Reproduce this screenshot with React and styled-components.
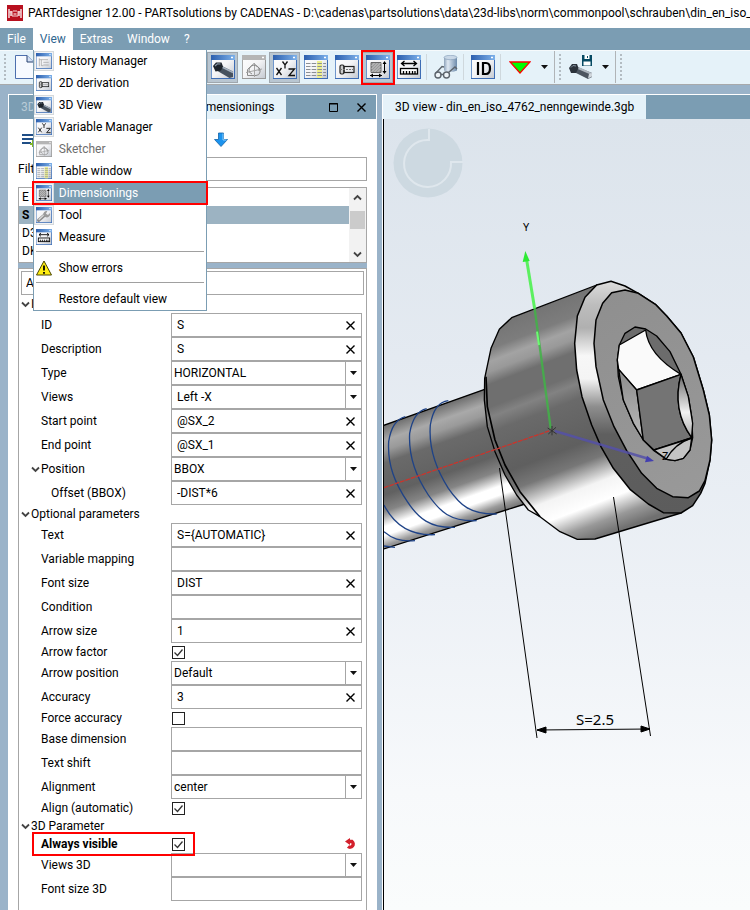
import React, { useState } from 'react';
import styled, { createGlobalStyle, css } from 'styled-components';

const GlobalStyle = createGlobalStyle`
*{
    box-sizing: border-box;
}
body{
    margin: 0;
    font-family: Roboto, "Noto Sans", sans-serif;
    font-size: 12px;
    color: #000;
    background: #9ab3c9;
}
button, input, select{
    font: inherit;
    color: inherit;
    margin: 0;
    border-radius: 0;
}
button{
    border: 0;
    padding: 0;
    background: none;
}
svg{
    display: block;
    flex-shrink: 0;
}
`;

const Window = styled.div`
display: flex;
flex-direction: column;
min-height: 100vh;
overflow: hidden;
`;
const TitleBar = styled.header`
display: flex;
align-items: center;
gap: 5px;
height: 28px;
padding: 0 0 2px 7px;
background: #fff;
white-space: nowrap;
overflow: hidden;
`;
const Title = styled.h1`
margin: 0;
font-size: 12px;
font-weight: 400;
`;
const MenuBar = styled.nav`
display: flex;
height: 22px;
background: #7b9db3;
`;
const MenuSlot = styled.div`
position: relative;
`;
const MenuTitle = styled.button`
height: 22px;
padding: 0 7px;
color: ${({ $open }) => ($open ? '#2f6690' : '#fff')};
background: ${({ $open }) => ($open ? '#fff' : 'transparent')};
`;
const Menu = styled.div`
position: absolute;
z-index: 5;
top: 22px;
left: 0;
width: 174px;
border: 1px solid #7b9db3;
border-top: 0;
background: #fff;
`;
const redFrame = css`
position: relative;
&::after{
    content: '';
    position: absolute;
    z-index: 2;
    inset: ${({ $inset }) => $inset || '-1px -2px'};
    border: 2px solid #f00;
    pointer-events: none;
}
`;
const MenuItem = styled.button`
display: flex;
align-items: center;
gap: 5px;
width: 100%;
height: 22px;
text-align: left;
color: ${({ disabled }) => (disabled ? '#6d6d6d' : '#000')};
${({ $marked }) => $marked && css`
    ${redFrame}
    color: #fff;
    background: #7b9db3;
`}
`;
const MenuIcon = styled.span`
display: flex;
align-items: center;
justify-content: center;
width: 20px;
height: 20px;
border: 1px solid ${({ $on }) => ($on ? '#d5d9dc' : 'transparent')};
background: ${({ $on }) => ($on ? '#f1f3f5' : 'transparent')};
`;
const MenuLine = styled.hr`
height: 1px;
margin: 3px 2px 5px;
border: 0;
background: #a0a0a0;
`;

const ToolBar = styled.div`
display: flex;
height: 35px;
padding-bottom: 1px;
border-top: 1px solid #f6fafc;
border-bottom: 1px solid #a7a9ab;
background: #e5f2f9;
`;
const ToolGroup = styled.div`
display: flex;
align-items: center;
flex: 0 0 auto;
border-right: ${({ $last }) => ($last ? '0' : '1px solid #b0b4b7')};
`;
const FileTools = styled.div`
display: flex;
align-items: center;
flex: 0 0 207px;
`;
const Grip = styled.span`
width: 2px;
height: 26px;
margin: 0 4px;
background: repeating-linear-gradient(#b3bcc2 0 2px, transparent 2px 4px);
`;
const ToolButton = styled.button`
display: flex;
align-items: center;
justify-content: center;
width: 31px;
height: 31px;
border: 1px solid ${({ $on }) => ($on ? '#9fa7ae' : 'transparent')};
background: ${({ $on }) => ($on ? '#b9c6d1' : 'transparent')};
${({ $marked }) => $marked && redFrame}
`;
const ToolLine = styled.span`
width: 1px;
height: 26px;
margin: 0 3px 0 2px;
background: #cfd8dd;
`;
const DropButton = styled.button`
display: flex;
align-items: center;
justify-content: center;
width: 19px;
height: 31px;
`;

const Main = styled.main`
display: grid;
grid-template-columns: minmax(0, 369fr) minmax(0, 368fr);
gap: 5px;
flex: 1;
padding: 9px 0 0 8px;
`;
const Dock = styled.section`
display: flex;
flex-direction: column;
border: 1px solid #fff;
border-bottom: 0;
background: #fff;
`;
const ViewDock = styled(Dock)`
border-right: 0;
`;
const TabBar = styled.div`
display: flex;
height: 24px;
background: #7b9db3;
`;
const Tab = styled.button`
padding: 0 12px;
text-align: left;
white-space: nowrap;
flex: ${({ $wide }) => ($wide ? '0 0 174px' : '0 0 auto')};
color: ${({ $active }) => ($active ? '#000' : '#b9cbd7')};
background: ${({ $active }) => ($active ? '#e5f2f9' : 'transparent')};
`;
const DockButtons = styled.div`
display: flex;
align-items: center;
gap: 18px;
margin-left: auto;
padding-right: 10px;
`;
const DockBody = styled.div`
display: flex;
flex-direction: column;
flex: 1;
padding: 0 9px;
`;
const DockTools = styled.div`
display: flex;
align-items: center;
gap: 178px;
height: 38px;
padding: 4px 0 0 4px;
`;
const FilterRow = styled.div`
display: flex;
align-items: center;
gap: 8px;
height: 24px;
margin-bottom: 6px;
input{
    flex: 1;
    height: 24px;
    border: 1px solid #a6a6a6;
}
`;
const ListBox = styled.div`
display: flex;
height: 76px;
border: 1px solid #a6a6a6;
`;
const List = styled.ul`
flex: 1;
margin: 0;
padding: 0;
list-style: none;
`;
const ListRow = styled.li`
height: 18px;
padding-left: 3px;
line-height: 18px;
font-weight: ${({ $active }) => ($active ? 700 : 400)};
background: ${({ $active }) => ($active ? '#9cb3c2' : 'transparent')};
`;
const ScrollBar = styled.div`
display: flex;
flex-direction: column;
align-items: center;
justify-content: space-between;
width: 17px;
padding: 6px 0 4px;
background: #f2f2f2;
`;
const Thumb = styled.span`
width: 15px;
height: 18px;
margin-bottom: 12px;
background: #cbcbcb;
`;
const Splitter = styled.div`
height: 5px;
background: #9ab3c9;
`;
const Properties = styled.form`
flex: 1;
padding: 2px 2px 9px;
border: 1px solid #a6a6a6;
border-bottom: 0;
`;
const Search = styled.input`
display: block;
width: 100%;
height: 24px;
padding: 0 4px;
border: 1px solid #a6a6a6;
`;
const Section = styled.h2`
display: flex;
align-items: center;
gap: 1px;
height: 18px;
margin: 0;
font-size: 12px;
font-weight: 400;
`;
const Row = styled.div`
display: flex;
align-items: center;
height: ${({ $short }) => ($short ? '18px' : '24px')};
padding-right: 2px;
${({ $marked }) => $marked && css`
    font-weight: 700;
`}
`;
const RowMark = styled.div`
${redFrame}
display: flex;
align-items: center;
height: 18px;
flex: 0 0 165px;
`;
const RowLabel = styled.label`
display: flex;
align-items: center;
gap: 1px;
flex: 0 0 150px;
padding-left: ${({ $level }) => ($level === 'group' ? '10px' : $level === 'deep' ? '30px' : '20px')};
`;
const Field = styled.div`
position: relative;
display: flex;
flex: 1;
min-width: 0;
height: 24px;
border: 1px solid #a6a6a6;
background: #fff;
`;
const TextBox = styled.input`
flex: 1;
min-width: 0;
padding: 0 0 1px 5px;
border: 0;
outline: 0;
`;
const ClearButton = styled.button`
display: flex;
align-items: center;
justify-content: center;
flex: 0 0 22px;
`;
const Select = styled.select`
flex: 1;
padding: 0 20px 1px ${({ $indent }) => ($indent ? '5px' : '2px')};
border: 0;
outline: 0;
appearance: none;
background: transparent;
`;
const SelectArrow = styled.span`
position: absolute;
top: 0;
right: 0;
display: flex;
align-items: center;
justify-content: center;
width: 16px;
height: 22px;
border-left: 1px solid #a6a6a6;
pointer-events: none;
`;
const CheckBox = styled.input`
appearance: none;
width: 13px;
height: 13px;
margin: 0 0 0 1px;
border: 1px solid #222;
background: #fff;
&:checked{
    background: no-repeat center/11px url("data:image/svg+xml,%3Csvg xmlns='http://www.w3.org/2000/svg' viewBox='0 0 11 11'%3E%3Cpath d='M1.5 5.5l3 3 5-6' fill='none' stroke='%23333' stroke-width='1.3'/%3E%3C/svg%3E");
}
`;
const ResetButton = styled.button`
margin-left: auto;
margin-right: 5px;
`;
const Canvas = styled.div`
flex: 1;
border-left: 1px solid #000;
background: linear-gradient(#dce4ec, #e4eaf1 30%, #edf1f6 60%, #f7f9fb 85%, #fafcfc);
svg{
    width: 100%;
    height: auto;
}
`;

/* small window frame that most of the tool icons are drawn in */
const WinIcon = ({ size = 24, grey, children }) => (
    <svg width={size} height={size} viewBox="0 0 24 24">
        <defs>
            <linearGradient id="winBody" x1="0" y1="0" x2="1" y2="1">
                <stop offset="0" stopColor="#fff" />
                <stop offset=".5" stopColor="#f4f4f6" />
                <stop offset="1" stopColor="#c3c8d0" />
            </linearGradient>
            <linearGradient id="winBar">
                <stop offset="0" stopColor="#2c5fae" />
                <stop offset="1" stopColor="#7db1ea" />
            </linearGradient>
        </defs>
        <rect x=".5" y=".5" width="23" height="23" fill="url(#winBody)" stroke={grey ? '#a9a9a9' : '#6f96cc'} />
        <rect width="24" height="5" fill={grey ? '#b5b5b5' : 'url(#winBar)'} />
        <path d="M0 23.5H24M23.5 5V24" stroke={grey ? '#999' : '#3d6cb4'} />
        <path d="M20 2.5h2" stroke="#fff" strokeWidth="1.5" />
        {children}
    </svg>
);

const Bolt = () => (
    <>
        <path d="M9 10L22 16.500V22L18.500 23L6.500 16Z" fill="#46515e" />
        <path d="M10 11.500L22 17.500" stroke="#a3afbd" strokeWidth="1.600" />
        <path d="M2 11L5 7.500L10.500 7.500L12 11.500L10 15.500L4.500 16.500Z" fill="#1d232b" />
        <path d="M4 11L6.500 8.800L9.500 9" stroke="#8a97a6" strokeWidth="1.200" fill="none" />
    </>
);

const glyphs = {
    history: <path d="M5 8v12M5 10h13M8 10v9h3M11 14h8M11 18h8" stroke="#9a9a9a" fill="none" />,
    flat: (
        <g fill="none" stroke="#222" strokeWidth="1.200">
            <rect x="5" y="10" width="4" height="9" rx="1.500" fill="#ccc" />
            <rect x="9" y="11.500" width="10" height="6" />
            <path d="M5 14.500h14" strokeDasharray="2 1" stroke="#777" />
        </g>
    ),
    bolt: <Bolt />,
    xyz: (
        <g fill="none" stroke="#111" strokeWidth="1.300">
            <path d="M3.500 13l5 7M8.500 13l-5 7" />
            <path d="M9.500 6.500l2.500 3.500l2.500-3.500M12 10v3.500" />
            <path d="M15.500 14h6l-5.500 6.500h6" />
        </g>
    ),
    sketch: (
        <g fill="none" stroke="#8a8a8a">
            <path d="M5.500 20.500V14.500L12 8.500L18 14V17A4 4 0 0 1 14 20.500Z" />
            <path d="M4 17.500L20 14M12.500 8V22" stroke="#a5a5a5" />
            <path d="M10 19A5 4.500 0 1 1 17 16" />
        </g>
    ),
    table: (
        <g>
            <path d="M13 6h5v17h-5z" fill="#eef08e" />
            <path d="M2 8.500h20M2 11.500h20M2 14.500h20M2 17.500h20M2 20.500h20" stroke="#8b8f94" strokeDasharray="4.500 1.200" />
        </g>
    ),
    dims: (
        <g>
            <path d="M5 7.500h10v10H5z" fill="#999" stroke="#666" />
            <path d="M5.500 11l3-3M5.500 14l6-6M5.500 17l9-9M8.500 17l6-6M11.500 17l3-3" stroke="#c9c9c9" />
            <path d="M4 20.500h12M18.500 7v11" stroke="#000" fill="none" />
            <path d="M7 18.500l-3 2l3 2zM13 18.500l3 2l-3 2zM16.500 9l2-3l2 3zM16.500 16l2 3l2-3z" />
        </g>
    ),
    tool: (
        <g>
            <path d="M4 20L13 12" stroke="#8c8c8c" strokeWidth="5" strokeLinecap="round" />
            <path d="M4 19L13 11" stroke="#dcdcdc" strokeWidth="2" />
            <path d="M11 12a5 5 0 0 1 6-6l-2 4l3 2l3-3a5 5 0 0 1-7 6z" fill="#9b9b9b" />
        </g>
    ),
    measure: (
        <g fill="none" stroke="#000" strokeWidth="1.300">
            <path d="M4.500 8.500h15M7.500 6l-3 2.500l3 2.500M16.500 6l3 2.500l-3 2.500" />
            <rect x="3.500" y="13.500" width="17" height="5.500" fill="#fff" />
            <path d="M6.500 16v3M9.500 16v3M12.500 16v3M15.500 16v3M18 16v3" />
        </g>
    ),
    id: <path d="M7 7v13M12 8h3q4 0 4 5.500t-4 5.500h-3z" fill="none" stroke="#000" strokeWidth="2.200" />,
};

const Warning = () => (
    <svg width="16" height="16" viewBox="0 0 16 16">
        <path d="M8 1L15.500 15H.5Z" fill="#ffee12" stroke="#4a4600" strokeLinejoin="round" />
        <path d="M8 5.500v5M8 12v1.800" stroke="#000" strokeWidth="1.800" />
    </svg>
);

const Cross = () => (
    <svg width="9" height="9" viewBox="0 0 9 9">
        <path d="M.5 .5L8.500 8.500M8.500 .5L.5 8.500" stroke="#000" strokeWidth="1.400" />
    </svg>
);

const Caret = () => (
    <svg width="7" height="4" viewBox="0 0 7 4">
        <path d="M0 0h7L3.500 4z" fill="#111" />
    </svg>
);

const Chevron = ({ up }) => (
    <svg width="9" height="7" viewBox="0 0 9 7">
        <path d={up ? 'M1 5.500L4.500 2L8 5.500' : 'M1 1.500L4.500 5L8 1.500'} fill="none" stroke="#444" strokeWidth="1.800" />
    </svg>
);

const SaveBolt = () => (
    <svg width="24" height="24" viewBox="0 0 24 24">
        <path d="M6 11L23 18V22L19 24L5 17Z" fill="#4c5560" />
        <path d="M8 12.500L22.500 18.800" stroke="#aeb6bf" strokeWidth="2" />
        <path d="M19 23.500L23 21.500V18L20 19Z" fill="#cfd6dc" />
        <path d="M0 13L3 9L8 9L9.500 13L7 18L2 18Z" fill="#2b323b" />
        <path d="M2 12.500L4 10.500L7 11" stroke="#8692a0" fill="none" />
        <path d="M13 0h10v11H13z" fill="#064a63" />
        <path d="M15.500 0h5v4h-5zM14.500 6.500h7v4h-7z" fill="#fff" />
        <path d="M18.500 1v2" stroke="#064a63" />
    </svg>
);

const ViewIcon = () => (
    <svg width="24" height="24" viewBox="0 0 24 24">
        <defs>
            <linearGradient id="cylinder">
                <stop offset="0" stopColor="#8ea3ba" />
                <stop offset=".3" stopColor="#dfe9f3" />
                <stop offset="1" stopColor="#6d8bab" />
            </linearGradient>
        </defs>
        <path d="M10 2.500v13q6 3 13 0v-13z" fill="url(#cylinder)" />
        <ellipse cx="16.500" cy="2.500" rx="6.500" ry="2.200" fill="#c9d8e7" stroke="#7f99b5" strokeWidth=".6" />
        <g fill="#eef4f8" stroke="#5c646c" strokeWidth="1.400">
            <circle cx="4" cy="20" r="3" />
            <circle cx="12.500" cy="20" r="3" />
            <path d="M2 18L8 11.500L10 12M14.500 17.500L21 12L23 14M7 19.500h2.500" fill="none" />
        </g>
    </svg>
);

const Logo = () => (
    <svg width="16" height="16" viewBox="0 0 16 16">
        <rect width="16" height="16" fill="#b8101f" />
        <path d="M2 4v9M4 6v5M14 4v9M12 6v5" stroke="#fff" strokeWidth="1.300" />
        <path d="M2 7h3M11 7h3M5 6v5h6V6M6 6h4" stroke="#f6d5d7" fill="none" />
        <path d="M6.500 9h3" stroke="#f2b6ba" strokeWidth="1.500" />
    </svg>
);

/* rendered screw with axes and the S dimension */
const Model = () => (
    <svg viewBox="384 119 366 791" fontFamily='"Noto Sans", sans-serif'>
        <defs>
            <linearGradient id="head" gradientUnits="userSpaceOnUse" x1="395" y1="323" x2="649" y2="986">
                <stop offset="0" stopColor="#747474" />
                <stop offset=".09" stopColor="#7d7d7d" />
                <stop offset=".14" stopColor="#a3a3a3" />
                <stop offset=".18" stopColor="#999" />
                <stop offset=".23" stopColor="#6f6f6f" />
                <stop offset=".32" stopColor="#6f6f6f" />
                <stop offset=".36" stopColor="#828282" />
                <stop offset=".42" stopColor="#6a6a6a" />
                <stop offset=".6" stopColor="#5f5f5f" />
                <stop offset=".68" stopColor="#777" />
                <stop offset=".78" stopColor="#f4f4f4" />
                <stop offset=".86" stopColor="#fff" />
                <stop offset=".94" stopColor="#999" />
                <stop offset="1" stopColor="#707070" />
            </linearGradient>
            <linearGradient id="shank" gradientUnits="userSpaceOnUse" x1="12" y1="645" x2="132" y2="985">
                <stop offset="0" stopColor="#6d6d6d" />
                <stop offset=".12" stopColor="#a9a9a9" />
                <stop offset=".2" stopColor="#9a9a9a" />
                <stop offset=".3" stopColor="#6a6a6a" />
                <stop offset=".55" stopColor="#616161" />
                <stop offset=".68" stopColor="#858585" />
                <stop offset=".8" stopColor="#fff" />
                <stop offset=".87" stopColor="#fff" />
                <stop offset=".95" stopColor="#9a9a9a" />
                <stop offset="1" stopColor="#777" />
            </linearGradient>
            <linearGradient id="rim" gradientUnits="userSpaceOnUse" x1="640" y1="215" x2="640" y2="909">
                <stop offset="0" stopColor="#dcdcdc" />
                <stop offset=".1" stopColor="#bdbdbd" />
                <stop offset=".2" stopColor="#b0b0b0" />
                <stop offset=".32" stopColor="#f7f7f7" />
                <stop offset=".42" stopColor="#f4f4f4" />
                <stop offset=".54" stopColor="#8e8e8e" />
                <stop offset=".66" stopColor="#5f5f5f" />
                <stop offset="1" stopColor="#5c5c5c" />
            </linearGradient>
            <linearGradient id="face" gradientUnits="userSpaceOnUse" x1="660" y1="250" x2="960" y2="860">
                <stop offset="0" stopColor="#8f8f8f" />
                <stop offset="1" stopColor="#999" />
            </linearGradient>
            <linearGradient id="socketSide" x1="0" y1="0" x2="0" y2="1">
                <stop offset="0" stopColor="#686868" />
                <stop offset=".6" stopColor="#f2f2f2" />
                <stop offset="1" stopColor="#aaa" />
            </linearGradient>
            <linearGradient id="socketLeft" x1="0" y1="0" x2="0" y2="1">
                <stop offset="0" stopColor="#8b8b8b" />
                <stop offset="1" stopColor="#bbb" />
            </linearGradient>
        </defs>

        <circle cx="428" cy="163" r="34.500" fill="#cdd9e1" />
        <path d="M429 129v11A23.500 23.500 0 1 0 451 162H463" fill="none" stroke="#dfe7ed" strokeWidth="2" />

        <g transform="translate(380 210) scale(.33333)" strokeLinejoin="round">
            <path d="M8 647L314 538L340 700L435 882L8 1018Z" fill="url(#shank)" />
            <path d="M8 647L314 538M8 1018L435 882" stroke="#000" strokeWidth="4" />
            <g fill="none" stroke="#1f4387" strokeWidth="4">
                <path d="M205 572Q162 577 151 645C145 720 170 780 205 835C240 885 270 914 350 912" />
                <path d="M140 596Q100 605 89 670C85 740 108 800 145 855C180 905 210 935 290 932" />
                <path d="M76 620Q36 630 26 695C22 765 45 820 82 875C115 925 150 955 225 952" />
                <path d="M12 885C40 940 85 978 165 974" />
                <path d="M12 965C35 985 60 996 105 992" />
                <path d="M12 1008L45 1012" />
            </g>

            <path d="M650 225L395 323L358 358L333 415L314 505L313 570L322 650L345 725L375 795L410 855L445 900L480 920L540 965L592 988L645 987L903 909L750 600Z" fill="url(#head)" stroke="#000" strokeWidth="4" />
            <path d="M318 500L322 590L345 690L375 765L420 845L480 920" fill="none" stroke="#000" strokeWidth="5" />
            <path d="M650 225L693 214L735 228L775 250L826 283L860 318L903 369L940 441L970 540L988 615L995 690L990 750L975 820L962 850L938 887L903 909L850 908L805 882L750 838L700 775L664 712L635 645L606 560L590 480L584 400L592 318L615 262Z" fill="url(#rim)" stroke="#000" strokeWidth="4.500" />
            <path d="M735 240L775 250L826 283L860 318L903 369L940 441L970 540L988 615L995 690L990 750L975 812L958 843L925 863L878 860L830 835L785 790L740 722L702 650L670 570L648 470L642 400L648 330L668 280L695 248Z" fill="url(#face)" stroke="#000" strokeWidth="4.500" />

            <g stroke="#000" strokeWidth="4">
                <path d="M718 405L735 370L765 351L797 357L830 378L870 425L903 493L925 560L935 620L938 683L930 720L910 745L885 752L860 748L822 722L790 690L760 640L730 570L715 500L712 450Z" fill="#6c6c6c" />
                <path d="M718 405L797 360Q805 435 903 493L770 540L716 478L712 450Z" fill="#fafafa" />
                <path d="M716 478L770 540L790 690L760 640L730 570Z" fill="url(#socketLeft)" />
                <path d="M770 540L903 493Q875 600 935 683L822 720L790 690Z" fill="#747474" />
                <path d="M903 493Q875 600 935 683L938 640L925 560Z" fill="url(#socketSide)" />
                <path d="M822 720L935 684L930 720L910 745L885 752L860 748Z" fill="#c4c4c4" />
                <path d="M935 684Q885 700 858 748" fill="none" />
            </g>

            <path d="M12 833L510 662" stroke="#c8352d" strokeWidth="4" strokeDasharray="14 3" />
            <path d="M440 150L464 296" stroke="#5cf060" strokeWidth="9" />
            <path d="M464 296L512 655" stroke="#41b447" strokeWidth="7" opacity=".85" />
            <path d="M471 365L477 405" stroke="#6dfa72" strokeWidth="6" />
            <path d="M436 123L449 153L428 156Z" fill="#2dea34" />
            <path d="M524 663L800 745" stroke="#5551a8" strokeWidth="8" opacity=".85" />
            <path d="M822 753L795 757L801 737Z" fill="#433fb0" />
            <path d="M503 654L530 672M505 672L528 652M516 648V676" stroke="#333" strokeWidth="3" />
        </g>

        <text x="523" y="231" fontSize="11">Y</text>
        <text x="662" y="460" fontSize="11">Z</text>
        <g stroke="#000" strokeWidth="1">
            <path d="M499.500 468L537 738M613.500 497L650.500 736M537 730L650 729" />
            <path d="M537 730l9-3v6zM650 729l-9-3v6z" />
        </g>
        <text x="576" y="725" fontSize="15">S=2.5</text>
    </svg>
);

const viewItems = [
    { name: 'History Manager', icon: 'history', on: true },
    { name: '2D derivation', icon: 'flat' },
    { name: '3D View', icon: 'bolt', on: true },
    { name: 'Variable Manager', icon: 'xyz', on: true },
    { name: 'Sketcher', icon: 'sketch', disabled: true },
    { name: 'Table window', icon: 'table' },
    { name: 'Dimensionings', icon: 'dims', on: true, marked: true },
    { name: 'Tool', icon: 'tool', on: true },
    { name: 'Measure', icon: 'measure' },
];

const viewTools = [
    { icon: 'bolt', label: '3D View', on: true },
    { icon: 'sketch', label: 'Sketcher' },
    { icon: 'xyz', label: 'Variable Manager', on: true },
    { icon: 'table', label: 'Table window' },
    { icon: 'flat', label: '2D derivation' },
    { icon: 'dims', label: 'Dimensionings', on: true, marked: true },
    { icon: 'measure', label: 'Measure' },
];

const mainRows = [
    { name: 'ID', value: 'S' },
    { name: 'Description', value: 'S' },
    { name: 'Type', value: 'HORIZONTAL', type: 'select' },
    { name: 'Views', value: 'Left -X', type: 'select', indent: true },
    { name: 'Start point', value: '@SX_2' },
    { name: 'End point', value: '@SX_1' },
    { name: 'Position', value: 'BBOX', type: 'select', level: 'group' },
    { name: 'Offset (BBOX)', value: '-DIST*6', level: 'deep' },
];

const optionalRows = [
    { name: 'Text', value: 'S={AUTOMATIC}' },
    { name: 'Variable mapping', value: '' },
    { name: 'Font size', value: 'DIST' },
    { name: 'Condition', value: '' },
    { name: 'Arrow size', value: '1' },
    { name: 'Arrow factor', value: true, type: 'check' },
    { name: 'Arrow position', value: 'Default', type: 'select' },
    { name: 'Accuracy', value: '3' },
    { name: 'Force accuracy', value: false, type: 'check' },
    { name: 'Base dimension', value: '' },
    { name: 'Text shift', value: '' },
    { name: 'Alignment', value: 'center', type: 'select' },
    { name: 'Align (automatic)', value: true, type: 'check' },
];

const modelRows = [
    { name: 'Always visible', value: true, type: 'check', marked: true },
    { name: 'Views 3D', value: '', type: 'select' },
    { name: 'Font size 3D', value: '' },
];

const PropertyRow = ({ name, value, type, level, indent, marked }) => {
    const [current, setCurrent] = useState(value);
    const id = name.toLowerCase().replace(/[^a-z0-9]+/g, '-');
    const label = (
        <RowLabel htmlFor={id} $level={level}>
            {level === 'group' && <Chevron />}
            {name}
        </RowLabel>
    );

    if (type === 'check') {
        const box = (
            <CheckBox id={id} type="checkbox" checked={current} onChange={(e) => setCurrent(e.target.checked)} />
        );
        if (marked) {
            return (
                <Row $short $marked>
                    <RowMark $inset="-3px -9px -3px 11px">
                        {label}
                        {box}
                    </RowMark>
                    <ResetButton type="button" aria-label="Reset">
                        <svg width="12" height="12" viewBox="0 0 12 12">
                            <path d="M3 3.500H7A3 3 0 1 1 3 8.500" fill="none" stroke="#d3202c" strokeWidth="3.400" />
                            <path d="M0 3.500L5 0V7Z" fill="#d3202c" />
                        </svg>
                    </ResetButton>
                </Row>
            );
        }
        return (
            <Row $short>
                {label}
                {box}
            </Row>
        );
    }

    return (
        <Row>
            {label}
            <Field>
                {type === 'select' ? (
                    <>
                        <Select id={id} $indent={indent} defaultValue={value}>
                            <option>{value}</option>
                        </Select>
                        <SelectArrow><Caret /></SelectArrow>
                    </>
                ) : (
                    <>
                        <TextBox id={id} value={current} onChange={(e) => setCurrent(e.target.value)} />
                        {current && (
                            <ClearButton type="button" aria-label={`Clear ${name}`} onClick={() => setCurrent('')}>
                                <Cross />
                            </ClearButton>
                        )}
                    </>
                )}
            </Field>
        </Row>
    );
};

const ViewMenu = () => (
    <Menu>
        {viewItems.map((item) => (
            <MenuItem key={item.name} disabled={item.disabled} $marked={item.marked}>
                <MenuIcon $on={item.on}>
                    <WinIcon size={16} grey={item.disabled}>{glyphs[item.icon]}</WinIcon>
                </MenuIcon>
                {item.name}
            </MenuItem>
        ))}
        <MenuLine />
        <MenuItem><MenuIcon><Warning /></MenuIcon>Show errors</MenuItem>
        <MenuLine />
        <MenuItem><MenuIcon />Restore default view</MenuItem>
    </Menu>
);

const Tools = () => (
    <ToolBar>
        <ToolGroup>
            <FileTools>
                <Grip />
                <ToolButton aria-label="New">
                    <svg width="24" height="24" viewBox="0 0 24 24">
                        <path d="M1.500 .5H13L19.500 7V23.500H1.500Z" fill="#f7faff" stroke="#4d6fae" />
                        <path d="M13 .5V7H19.500" fill="#d3e0f4" stroke="#27406f" />
                    </svg>
                </ToolButton>
            </FileTools>
            {viewTools.map((tool) => (
                <ToolButton key={tool.icon} aria-label={tool.label} $on={tool.on} $marked={tool.marked} $inset="-3px -3px -3px -2px">
                    <WinIcon grey={tool.icon === 'sketch'}>{glyphs[tool.icon]}</WinIcon>
                </ToolButton>
            ))}
            <ToolLine />
            <ToolButton aria-label="Show"><ViewIcon /></ToolButton>
            <ToolLine />
            <ToolButton aria-label="ID"><WinIcon>{glyphs.id}</WinIcon></ToolButton>
            <ToolLine />
            <ToolButton aria-label="Filter">
                <svg width="22" height="13" viewBox="0 0 22 13">
                    <path d="M1 1H21L11 12Z" fill="#0f0" stroke="#f00" strokeWidth="1.300" />
                </svg>
            </ToolButton>
            <DropButton aria-label="Filter options"><Caret /></DropButton>
        </ToolGroup>
        <ToolGroup>
            <Grip />
            <ToolButton aria-label="Export"><SaveBolt /></ToolButton>
            <DropButton aria-label="Export options"><Caret /></DropButton>
        </ToolGroup>
        <ToolGroup $last>
            <Grip />
        </ToolGroup>
    </ToolBar>
);

const DimensionDock = () => (
    <Dock>
        <TabBar>
            <Tab $wide>3D</Tab>
            <Tab $active>Dimensionings</Tab>
            <DockButtons>
                <button aria-label="Maximize">
                    <svg width="11" height="11" viewBox="0 0 11 11">
                        <path d="M1.500 1.500h8v8h-8zM1 2h9" fill="none" stroke="#000" />
                    </svg>
                </button>
                <button aria-label="Close"><Cross /></button>
            </DockButtons>
        </TabBar>
        <DockBody>
            <DockTools>
                <button aria-label="List">
                    <svg width="14" height="16" viewBox="0 0 14 16">
                        <path d="M0 3h12M0 7h12M0 11h9" stroke="#1f4e86" strokeWidth="1.800" />
                        <path d="M11 8v7M8 12h6" stroke="#7fb62a" strokeWidth="2" />
                    </svg>
                </button>
                <button aria-label="Move down">
                    <svg width="14" height="16" viewBox="0 0 14 16">
                        <path d="M4.500 1h5v6.500h4L7 14.500L.5 7.500h4z" fill="#1b93ee" stroke="#1262a8" strokeWidth=".8" />
                        <path d="M9 1.500v6.500h3.500" stroke="#8cd0ff" fill="none" />
                    </svg>
                </button>
            </DockTools>
            <FilterRow>
                <label htmlFor="filter">Filter</label>
                <input id="filter" />
            </FilterRow>
            <ListBox>
                <List>
                    <ListRow>E</ListRow>
                    <ListRow $active>S</ListRow>
                    <ListRow>D3</ListRow>
                    <ListRow>DK</ListRow>
                </List>
                <ScrollBar>
                    <Chevron up />
                    <Thumb />
                    <Chevron />
                </ScrollBar>
            </ListBox>
            <Splitter />
            <Properties onSubmit={(e) => e.preventDefault()}>
                <Search aria-label="Search" defaultValue="A" />
                <Section><Chevron />I</Section>
                {mainRows.map((row) => <PropertyRow key={row.name} {...row} />)}
                <Section><Chevron />Optional parameters</Section>
                {optionalRows.map((row) => <PropertyRow key={row.name} {...row} />)}
                <Section><Chevron />3D Parameter</Section>
                {modelRows.map((row) => <PropertyRow key={row.name} {...row} />)}
            </Properties>
        </DockBody>
    </Dock>
);

const App = () => {
    return (
        <Window>
            <GlobalStyle />
            <TitleBar>
                <Logo />
                <Title>PARTdesigner 12.00 - PARTsolutions by CADENAS - D:\cadenas\partsolutions\data\23d-libs\norm\commonpool\schrauben\din_en_iso_4762</Title>
            </TitleBar>
            <MenuBar>
                <MenuTitle>File</MenuTitle>
                <MenuSlot>
                    <MenuTitle $open>View</MenuTitle>
                    <ViewMenu />
                </MenuSlot>
                <MenuTitle>Extras</MenuTitle>
                <MenuTitle>Window</MenuTitle>
                <MenuTitle>?</MenuTitle>
            </MenuBar>
            <Tools />
            <Main>
                <DimensionDock />
                <ViewDock>
                    <TabBar>
                        <Tab $active>3D view - din_en_iso_4762_nenngewinde.3gb</Tab>
                    </TabBar>
                    <Canvas><Model /></Canvas>
                </ViewDock>
            </Main>
        </Window>
    );
};

export default App;
